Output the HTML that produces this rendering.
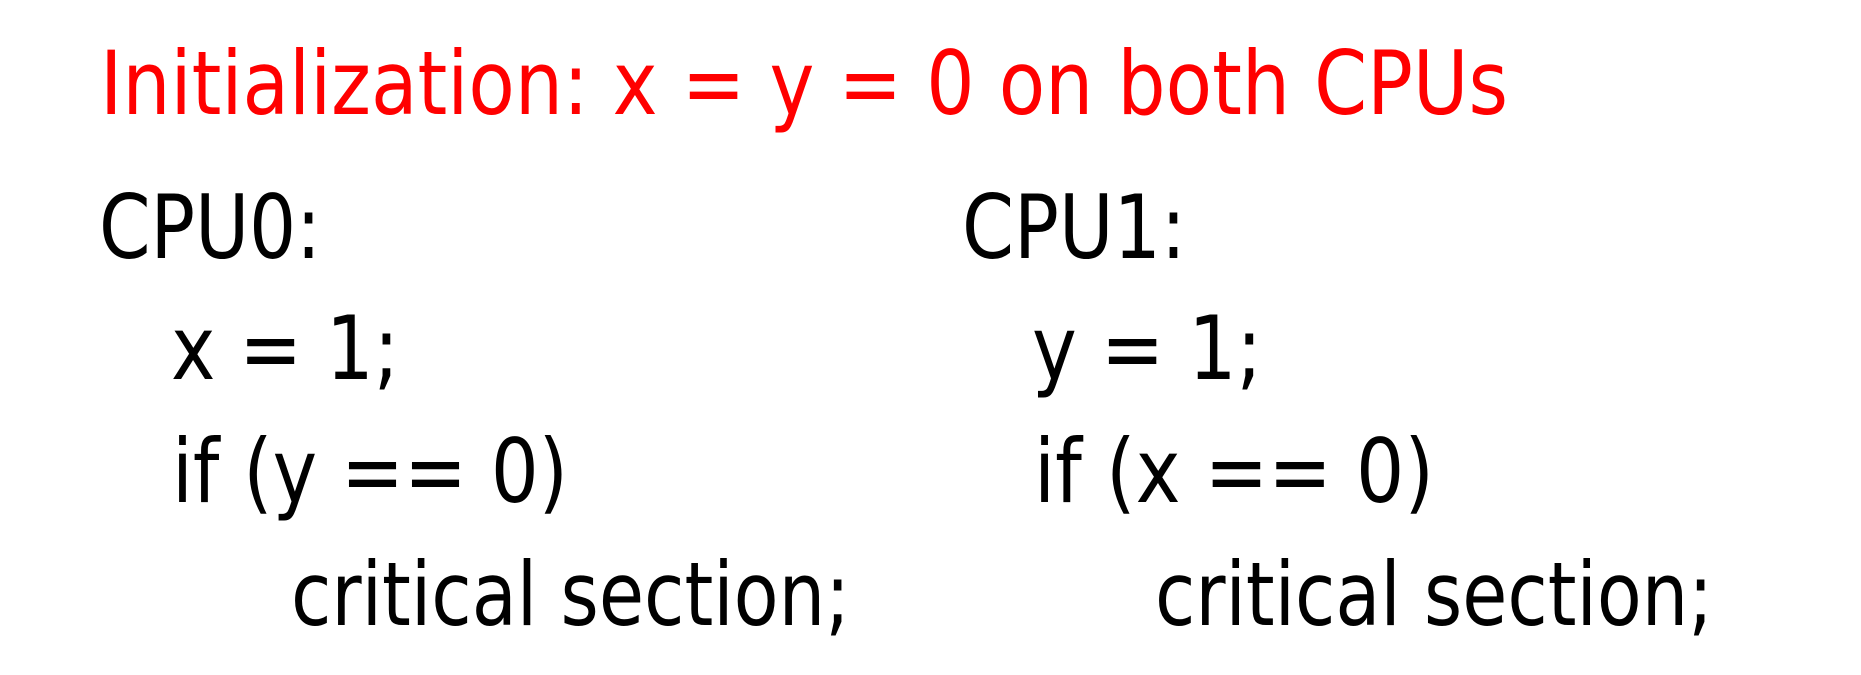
<!DOCTYPE html>
<html><head><meta charset="utf-8"><style>
html,body{margin:0;padding:0;background:#fff;}
svg{display:block;}
text{font-family:"DejaVu Sans","Liberation Sans",sans-serif;font-size:88px;}
</style></head><body>
<svg width="1861" height="675" viewBox="0 0 1861 675" xmlns="http://www.w3.org/2000/svg">
<rect width="1861" height="675" fill="#fff"/>
<text x="100" y="114" fill="#ff0000" textLength="1408" lengthAdjust="spacingAndGlyphs">Initialization: x = y = 0 on both CPUs</text>
<text x="99" y="258" fill="#000" textLength="222" lengthAdjust="spacingAndGlyphs">CPU0:</text>
<text x="962" y="258" fill="#000" textLength="224" lengthAdjust="spacingAndGlyphs">CPU1:</text>
<text x="171" y="379" fill="#000" textLength="228" lengthAdjust="spacingAndGlyphs">x = 1;</text>
<text x="1032" y="379" fill="#000" textLength="230" lengthAdjust="spacingAndGlyphs">y = 1;</text>
<text x="172" y="502" fill="#000" textLength="396" lengthAdjust="spacingAndGlyphs">if (y == 0)</text>
<text x="1034" y="502" fill="#000" textLength="400" lengthAdjust="spacingAndGlyphs">if (x == 0)</text>
<text x="291" y="625" fill="#000" textLength="559" lengthAdjust="spacingAndGlyphs">critical section;</text>
<text x="1155" y="625" fill="#000" textLength="558" lengthAdjust="spacingAndGlyphs">critical section;</text>
</svg>
</body></html>
